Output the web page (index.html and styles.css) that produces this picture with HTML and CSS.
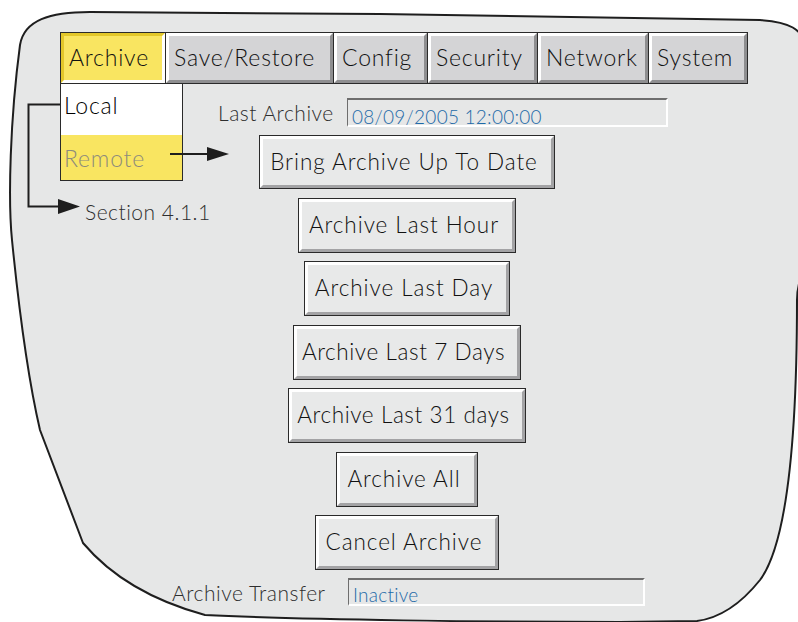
FILE: index.html
```html
<html>
<head>
<title>Archive</title>
<link rel="stylesheet" href="styles.css">
</head>
<body>
<div class="stage">

<svg class="outline" width="798" height="622" viewBox="0 0 798 622">
  <path d="M83,543 L40,430 C26,370 18,300 12,240 C8,200 10,120 20,45 C24,20 50,12 90,12 L380,14 C560,17 700,20 760,20 C790,22 800,28 812,50 L812,250 C806,265 797,280 797,300 C797,420 790,540 760,580 C740,605 720,618 697,621 L620,622 C500,622 300,620 205,615 C150,600 110,575 83,543 Z"
        fill="#e6e7e7" stroke="#1e1e1e" stroke-width="2"/>
</svg>

<div class="screen">
  <div class="tabs">
    <div class="tab tab-on">Archive</div>
    <div class="tab">Save/Restore</div>
    <div class="tab">Config</div>
    <div class="tab">Security</div>
    <div class="tab">Network</div>
    <div class="tab">System</div>
  </div>

  <div class="under">
    <div class="menu">
      <div class="menu-item">Local</div>
      <div class="menu-item menu-sel">Remote</div>
    </div>

    <div class="main">
      <div class="field-row">
        <span class="label">Last Archive</span>
        <span class="field field-long">08/09/2005 12:00:00</span>
      </div>
      <div class="actions">
        <div class="btn btn-first">Bring Archive Up To Date</div>
        <div class="btn">Archive Last Hour</div>
        <div class="btn">Archive Last Day</div>
        <div class="btn btn-num">Archive Last 7 Days</div>
        <div class="btn btn-num">Archive Last 31 days</div>
        <div class="btn">Archive All</div>
        <div class="btn">Cancel Archive</div>
      </div>
    </div>
  </div>

  <div class="transfer">
    <span class="label">Archive Transfer</span>
    <span class="field field-short">Inactive</span>
  </div>
</div>

<!-- annotation arrows -->
<svg class="notes" width="798" height="622" viewBox="0 0 798 622">
  <polyline points="60,104.5 28.5,104.5 28.5,206.5 60,206.5" fill="none" stroke="#1e1e1e" stroke-width="2"/>
  <polygon points="58,199 80,206.5 58,214" fill="#1e1e1e"/>
  <line x1="170" y1="154" x2="210" y2="154" stroke="#1e1e1e" stroke-width="2"/>
  <polygon points="207,147 229,154 207,161" fill="#1e1e1e"/>
</svg>
<div class="note">Section 4.1.1</div>

</div>
</body>
</html>
```

FILE: styles.css
```css
body { margin:0; background:#fff; font-family:Lato, "Open Sans", sans-serif; font-weight:300; color:#111; }

.stage { position:relative; width:798px; height:622px; overflow:hidden; }
.outline, .notes { position:absolute; left:0; top:0; }
.notes { pointer-events:none; }

.screen { position:relative; padding:32px 0 0 60px; }

/* tab bar */
.tabs { display:flex; width:688px; height:52px; box-sizing:border-box; border:1px solid #2a2a2a; background:#2a2a2a; gap:1px; }
.tab { box-sizing:border-box; height:50px; display:flex; align-items:center; padding:0 4px 3px 5px;
       font-size:23px; letter-spacing:0.8px; color:#111; background:#d4d4d6;
       border-style:solid; border-width:3px;
       border-color:#fff #8e8e90 #8e8e90 #fff; }
.tab:nth-child(1) { width:104px; }
.tab:nth-child(2) { width:167px; }
.tab:nth-child(3) { width:93px; }
.tab:nth-child(4) { width:109px; }
.tab:nth-child(5) { width:110px; }
.tab:nth-child(6) { flex:1; }
.tab-on { background:#f9e561; border-color:#e3c72a #fff #fff #e3c72a; }

/* drop menu + main */
.under { display:flex; }
.menu { width:123px; height:97px; box-sizing:border-box; border:1px solid #2a2a2a; border-top:none; flex:none; }
.menu-item { height:51px; box-sizing:border-box; padding:7px 0 0 3px; font-size:23px; letter-spacing:0.8px; background:#fff; color:#000; }
.menu-sel { height:45px; padding-top:9px; background:#f9e561; color:#8d8b7c; }

.main { display:flex; flex-direction:column; }
.field-row { display:flex; align-items:center; margin:14px 0 0 35px; height:29px; }
.label { font-size:21px; letter-spacing:0.5px; color:#2e2e2e; }
.field-row .label { width:117px; }
.field { box-sizing:border-box; height:29px; margin-left:12px; padding:5px 0 0 4px;
         font-size:19px; color:#1e6aa8; letter-spacing:0.25px;
         border-style:solid; border-width:2px 2px 2px 1px; border-color:#6e6e6e #fff #fff #6e6e6e; }
.field-long { width:321px; }

.actions { display:flex; flex-direction:column; align-items:center; gap:10.5px; width:448px; margin-top:9px; }
.btn { box-sizing:border-box; height:53px; display:flex; align-items:center; padding:0 13px 2px 7px;
       font-size:22.5px; letter-spacing:0.95px; color:#111; background:#e8e9e9;
       border:3px solid; border-color:#fff #a3a3a5 #a3a3a5 #fff;
       outline:1px solid #2a2a2a; outline-offset:0; }
.btn-first { height:52px; }
.btn-num { letter-spacing:0.6px; padding:0 12px 2px 5px; }

.transfer { display:flex; align-items:center; margin:9px 0 0 112px; height:28px; }
.transfer .label { width:157px; }
.transfer .field { margin-left:19px; height:28px; padding-top:3px; }
.field-short { width:297px; }

.note { position:absolute; left:85px; top:199px; font-size:21px; letter-spacing:0.5px; color:#2e2e2e; }
```
